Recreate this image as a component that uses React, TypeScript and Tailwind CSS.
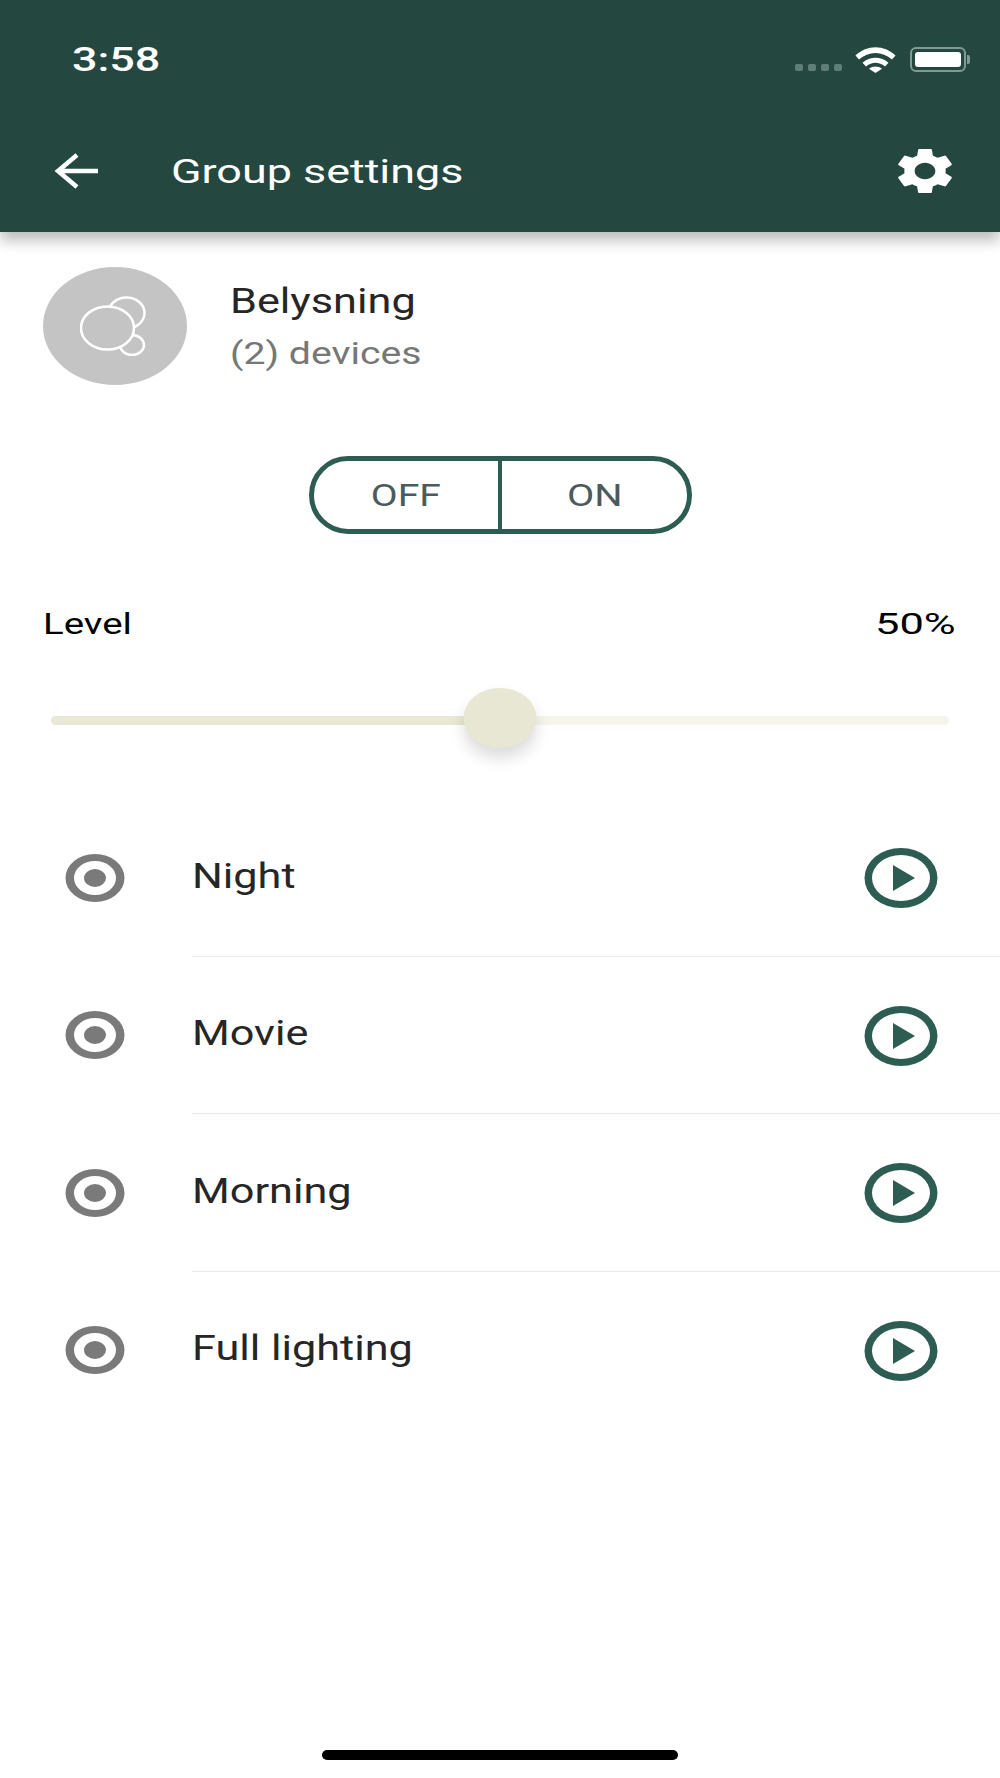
import React from 'react';

const scenes = ['Night', 'Movie', 'Morning', 'Full lighting'];

const GEAR =
  'M19.14 12.94c.04-.3.06-.61.06-.94 0-.32-.02-.64-.07-.94l2.03-1.58c.18-.14.23-.41.12-.61l-1.92-3.32c-.12-.22-.37-.29-.59-.22l-2.39.96c-.5-.38-1.03-.7-1.62-.94l-.36-2.54c-.04-.24-.24-.41-.48-.41h-3.84c-.24 0-.43.17-.47.41l-.36 2.54c-.59.24-1.13.57-1.62.94l-2.39-.96c-.22-.08-.47 0-.59.22L2.74 8.87c-.12.21-.08.47.12.61l2.03 1.58c-.05.3-.09.63-.09.94s.02.64.07.94l-2.03 1.58c-.18.14-.23.41-.12.61l1.92 3.32c.12.22.37.29.59.22l2.39-.96c.5.38 1.03.7 1.62.94l.36 2.54c.05.24.24.41.48.41h3.84c.24 0 .44-.17.47-.41l.36-2.54c.59-.24 1.13-.56 1.62-.94l2.39.96c.22.08.47 0 .59-.22l1.92-3.32c.12-.22.07-.47-.12-.61l-2.01-1.58zM12 15.6c-1.98 0-3.6-1.62-3.6-3.6s1.62-3.6 3.6-3.6 3.6 1.62 3.6 3.6-1.62 3.6-3.6 3.6z';

const EyeIcon: React.FC = () => (
  <svg className="w-[60px] h-[50px]" viewBox="0 0 60 50" preserveAspectRatio="none">
    <ellipse cx="30" cy="25" rx="29.5" ry="24" fill="#7a7a7a" />
    <ellipse cx="30" cy="25" rx="21" ry="17" fill="#fff" />
    <ellipse cx="30" cy="25" rx="11" ry="9" fill="#7a7a7a" />
  </svg>
);

const PlayIcon: React.FC = () => (
  <svg className="w-[74px] h-[60px] translate-y-[1px]" viewBox="0 0 74 60" preserveAspectRatio="none">
    <ellipse cx="37" cy="30" rx="36.5" ry="30" fill="#2d5d52" />
    <ellipse cx="37" cy="30" rx="29" ry="23" fill="#fff" />
    <path d="M29 17L51 30L29 43Z" fill="#2d5d52" />
  </svg>
);

const SceneRow: React.FC<{ name: string; last: boolean }> = ({ name, last }) => (
  <div className="flex h-[157.5px]">
    <div className="w-[192px] shrink-0 flex items-center pl-[65px]">
      <EyeIcon />
    </div>
    <div className={`flex-1 flex items-center justify-between pr-[62px] border-b ${last ? 'border-transparent' : 'border-[#e9e9e9]'}`}>
      <span className="inline-block origin-left scale-x-[1.235] text-[35px] leading-none text-[#262626] mb-[2px]">{name}</span>
      <PlayIcon />
    </div>
  </div>
);

export default function App() {
  return (
    <div className="relative w-[1000px] h-[1778px] bg-white overflow-hidden font-['Roboto',sans-serif]">
      <header className="h-[232px] bg-[#24483f] shadow-[0_8px_14px_rgba(0,0,0,0.28)] relative z-10">
        <div className="h-[120px] flex items-start justify-between pt-[42px] pl-[72px] pr-[30px]">
          <span className="inline-block origin-left scale-x-[1.36] text-[33px] leading-[36px] font-medium text-white">3:58</span>
          <div className="flex items-start">
            <div className="flex gap-[5px] mt-[22px] mr-[13px]">
              <span className="w-[8px] h-[7px] rounded-[2px] bg-[#5f7f76]" />
              <span className="w-[8px] h-[7px] rounded-[2px] bg-[#5f7f76]" />
              <span className="w-[8px] h-[7px] rounded-[2px] bg-[#5f7f76]" />
              <span className="w-[8px] h-[7px] rounded-[2px] bg-[#5f7f76]" />
            </div>
            <svg className="w-[41px] h-[26px] mt-[5px] mr-[14px]" viewBox="0 0 41 26" preserveAspectRatio="none">
              <path d="M0.5 8.5C12 -2.5 29 -2.5 40.5 8.5L37 12.5C27.5 3.8 13.5 3.8 4 12.5Z" fill="#fff" />
              <path d="M7.5 15.8C15 9 26 9 33.5 15.8L30 19.5C24 14.5 17 14.5 11 19.5Z" fill="#fff" />
              <path d="M14 21.8C18 18.6 23 18.6 27 21.8L20.5 26Z" fill="#fff" />
            </svg>
            <div className="mt-[5px] w-[56px] h-[25px] rounded-[6px] border-2 border-[#7f9a92] p-[3px]">
              <div className="w-full h-full rounded-[3px] bg-white" />
            </div>
            <div className="mt-[13px] ml-[1px] w-[3px] h-[9px] rounded-r-[2px] bg-[#7f9a92]" />
          </div>
        </div>
        <div className="h-[102px] flex items-center pl-[54px] pr-[48px]">
          <svg className="w-[44px] h-[36px] shrink-0" viewBox="0 0 44 36" preserveAspectRatio="none" fill="none" stroke="#fff" strokeWidth="4.5">
            <path d="M44 18H4M23 2L4 18L23 34" />
          </svg>
          <span className="ml-[73px] inline-block origin-left scale-x-[1.32] text-[34px] leading-none text-white">Group settings</span>
          <svg className="ml-auto w-[54px] h-[46px]" viewBox="2.6 2 18.8 20" preserveAspectRatio="none">
            <path d={GEAR} fill="#fff" />
          </svg>
        </div>
      </header>

      <section className="flex items-center pl-[43px] pt-[35px]">
        <div className="w-[144px] h-[118px] rounded-[50%] bg-[#c4c4c4] flex items-center justify-center">
          <svg className="w-[70px] h-[60px]" viewBox="0 0 70 60" fill="#c4c4c4" stroke="#fff" strokeWidth="2.5">
            <ellipse cx="52" cy="49" rx="12" ry="10" />
            <ellipse cx="46.5" cy="17" rx="18" ry="15.5" />
            <ellipse cx="27.5" cy="32" rx="26.5" ry="21.5" />
          </svg>
        </div>
        <div className="ml-[43px] flex flex-col pt-[2px]">
          <span className="inline-block origin-left scale-x-[1.235] text-[35px] leading-[52px] text-[#262626] translate-y-[1px]">Belysning</span>
          <span className="inline-block origin-left scale-x-[1.225] text-[32px] leading-[52px] text-[#777]">(2) devices</span>
        </div>
      </section>

      <div className="flex justify-center mt-[71px]">
        <div className="flex w-[383px] h-[78px] rounded-full border-[5px] border-[#2d5d52]">
          <div className="flex-1 flex items-center justify-center border-r-4 border-[#2d5d52]">
            <span className="inline-block scale-x-[1.26] text-[31px] leading-none text-[#4c5a5e]">OFF</span>
          </div>
          <div className="flex-1 flex items-center justify-center">
            <span className="inline-block scale-x-[1.28] text-[31px] leading-none text-[#4c5a5e]">ON</span>
          </div>
        </div>
      </div>

      <div className="flex justify-between pl-[43px] pr-[44px] mt-[72px]">
        <span className="inline-block origin-left scale-x-[1.28] text-[30px] leading-[36px] text-black">Level</span>
        <span className="inline-block origin-right scale-x-[1.45] text-[30px] leading-[36px] text-black">50%</span>
      </div>

      <div className="relative mt-[74px] mx-[51px] h-[9px] rounded-full bg-[#f5f5ec]">
        <div className="h-full w-1/2 rounded-l-full bg-[#e8e8d4]" />
        <div className="absolute left-1/2 -translate-x-1/2 -top-[28px] w-[73px] h-[60px] rounded-[50%] bg-[#e7e7d3] shadow-[0_10px_16px_rgba(0,0,0,0.14)]" />
      </div>

      <div className="mt-[74px]">
        {scenes.map((name, i) => (
          <SceneRow key={name} name={name} last={i === scenes.length - 1} />
        ))}
      </div>

      <div className="absolute bottom-[18px] left-[322px] w-[356px] h-[10px] rounded-full bg-black" />
    </div>
  );
}
